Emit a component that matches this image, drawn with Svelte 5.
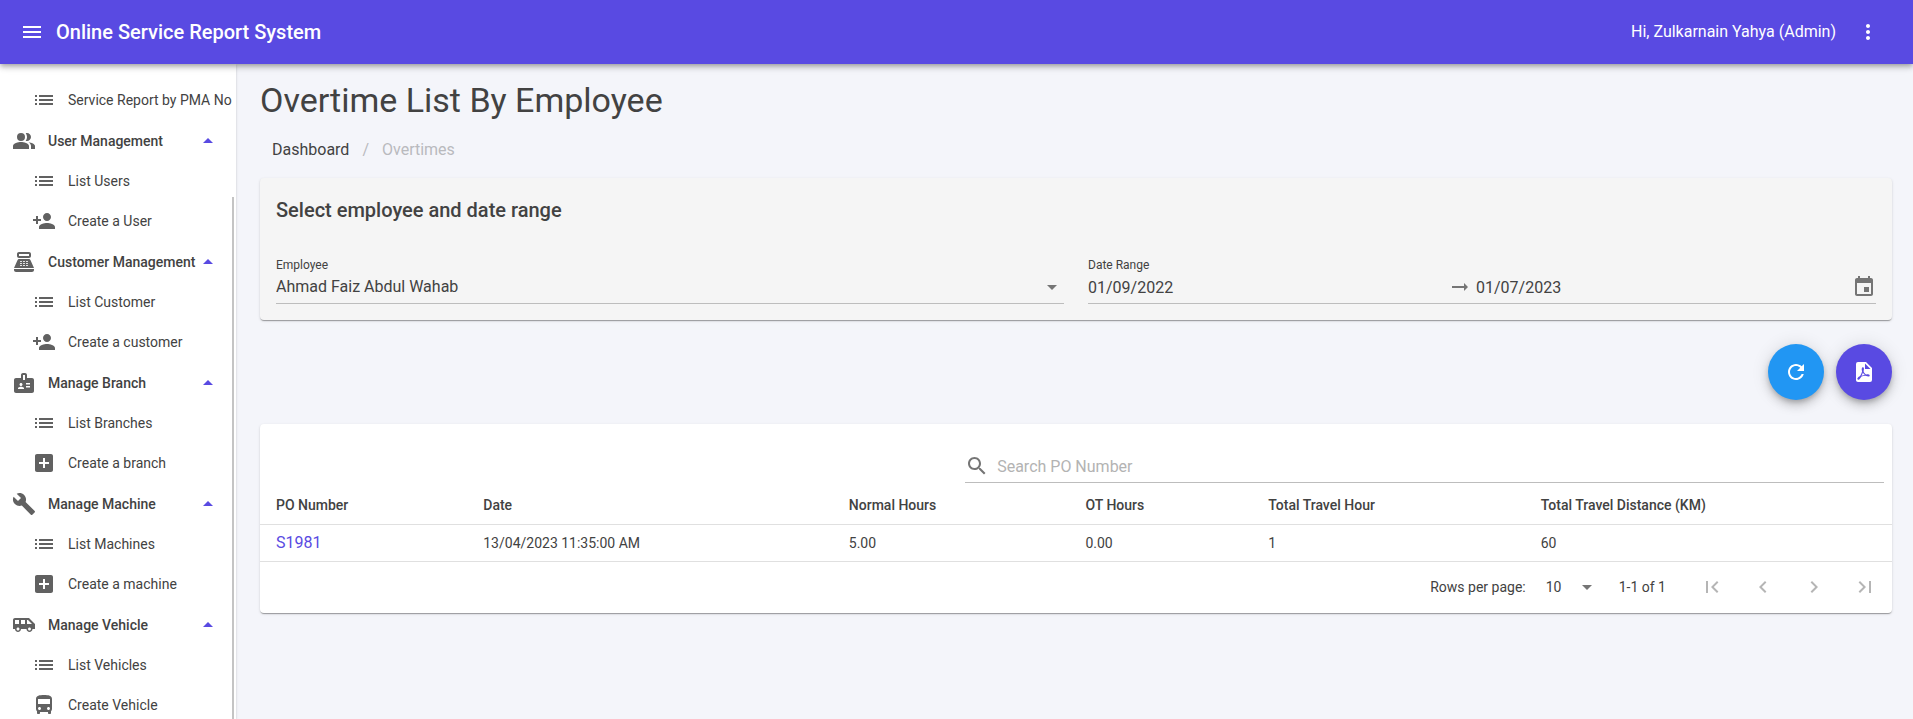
<script>
  const icons = {
    menu: 'M3 18h18v-2H3v2zm0-5h18v-2H3v2zm0-7v2h18V6H3z',
    more: 'M12 8c1.1 0 2-.9 2-2s-.9-2-2-2-2 .9-2 2 .9 2 2 2zm0 2c-1.1 0-2 .9-2 2s.9 2 2 2 2-.9 2-2-.9-2-2-2zm0 6c-1.1 0-2 .9-2 2s.9 2 2 2 2-.9 2-2-.9-2-2-2z',
    list: 'M3 13h2v-2H3v2zm0 4h2v-2H3v2zm0-8h2V7H3v2zm4 4h14v-2H7v2zm0 4h14v-2H7v2zM7 7v2h14V7H7z',
    people: 'M16.67 13.13C18.04 14.06 19 15.32 19 17v3h4v-3c0-2.18-3.57-3.47-6.33-3.87zM9 4a4 4 0 1 0 0 8 4 4 0 0 0 0-8zM15 12c2.21 0 4-1.79 4-4s-1.79-4-4-4c-.47 0-.91.1-1.33.24C14.5 5.27 15 6.58 15 8s-.5 2.73-1.33 3.76c.42.14.86.24 1.33.24zM9 13c-2.67 0-8 1.34-8 4v3h16v-3c0-2.66-5.33-4-8-4z',
    personAdd: 'M15 12c2.21 0 4-1.79 4-4s-1.79-4-4-4-4 1.79-4 4 1.79 4 4 4zm-9-2V7H4v3H1v2h3v3h2v-3h3v-2H6zm9 4c-2.67 0-8 1.34-8 4v2h16v-2c0-2.66-5.33-4-8-4z',
    register: 'M17 2H7c-1.1 0-2 .9-2 2v2c0 1.1.9 2 2 2h10c1.1 0 2-.9 2-2V4c0-1.1-.9-2-2-2zm0 4H7V4h10v2zm3 16H4c-1.1 0-2-.9-2-2v-1h20v1c0 1.1-.9 2-2 2zm-1.47-11.81C18.21 9.47 17.49 9 16.7 9H7.3c-.79 0-1.51.47-1.83 1.19L2 18h20l-3.47-7.81zM9.5 16h-1c-.28 0-.5-.22-.5-.5s.22-.5.5-.5h1c.28 0 .5.22.5.5s-.22.5-.5.5zm0-2h-1c-.28 0-.5-.22-.5-.5s.22-.5.5-.5h1c.28 0 .5.22.5.5s-.22.5-.5.5zm0-2h-1c-.28 0-.5-.22-.5-.5s.22-.5.5-.5h1c.28 0 .5.22.5.5s-.22.5-.5.5zm3 4h-1c-.28 0-.5-.22-.5-.5s.22-.5.5-.5h1c.28 0 .5.22.5.5s-.22.5-.5.5zm0-2h-1c-.28 0-.5-.22-.5-.5s.22-.5.5-.5h1c.28 0 .5.22.5.5s-.22.5-.5.5zm0-2h-1c-.28 0-.5-.22-.5-.5s.22-.5.5-.5h1c.28 0 .5.22.5.5s-.22.5-.5.5zm3 4h-1c-.28 0-.5-.22-.5-.5s.22-.5.5-.5h1c.28 0 .5.22.5.5s-.22.5-.5.5zm0-2h-1c-.28 0-.5-.22-.5-.5s.22-.5.5-.5h1c.28 0 .5.22.5.5s-.22.5-.5.5zm0-2h-1c-.28 0-.5-.22-.5-.5s.22-.5.5-.5h1c.28 0 .5.22.5.5s-.22.5-.5.5z',
    badge: 'M20 7h-5V4c0-1.1-.9-2-2-2h-2c-1.1 0-2 .9-2 2v3H4c-1.1 0-2 .9-2 2v11c0 1.1.9 2 2 2h16c1.1 0 2-.9 2-2V9c0-1.1-.9-2-2-2zM9 12c.83 0 1.5.67 1.5 1.5S9.83 15 9 15s-1.5-.67-1.5-1.5S8.17 12 9 12zm3 6H6v-.75c0-1 2-1.5 3-1.5s3 .5 3 1.5V18zm1-9h-2V4h2v5zm5 7.5h-4V15h4v1.5zm0-3h-4V12h4v1.5z',
    addBox: 'M19 3H5c-1.11 0-2 .9-2 2v14c0 1.1.89 2 2 2h14c1.1 0 2-.9 2-2V5c0-1.1-.9-2-2-2zm-2 10h-4v4h-2v-4H7v-2h4V7h2v4h4v2z',
    build: 'M22.7 19l-9.1-9.1c.9-2.3.4-5-1.5-6.9-2-2-5-2.4-7.4-1.3L9 6 6 9 1.6 4.7C.4 7.1.9 10.1 2.9 12.1c1.9 1.9 4.6 2.4 6.9 1.5l9.1 9.1c.4.4 1 .4 1.4 0l2.3-2.3c.5-.4.5-1.1.1-1.4z',
    shuttle: 'M17 5H3c-1.1 0-2 .89-2 2v9h2c0 1.65 1.34 3 3 3s3-1.35 3-3h5.5c0 1.65 1.34 3 3 3s3-1.35 3-3H23v-5l-6-6zM3 11V7h4v4H3zm3 6.5c-.83 0-1.5-.67-1.5-1.5s.67-1.5 1.5-1.5 1.5.67 1.5 1.5-.67 1.5-1.5 1.5zm7-6.5H9V7h4v4zm4.5 6.5c-.83 0-1.5-.67-1.5-1.5s.67-1.5 1.5-1.5 1.5.67 1.5 1.5-.67 1.5-1.5 1.5zM15 11V7h1l4 4h-5z',
    bus: 'M4 16c0 .88.39 1.67 1 2.22V20c0 .55.45 1 1 1h1c.55 0 1-.45 1-1v-1h8v1c0 .55.45 1 1 1h1c.55 0 1-.45 1-1v-1.78c.61-.55 1-1.34 1-2.22V6c0-3.5-3.58-4-8-4s-8 .5-8 4v10zm3.5 1c-.83 0-1.5-.67-1.5-1.5S6.67 14 7.5 14s1.5.67 1.5 1.5S8.33 17 7.5 17zm9 0c-.83 0-1.5-.67-1.5-1.5s.67-1.5 1.5-1.5 1.5.67 1.5 1.5-.67 1.5-1.5 1.5zm1.5-6H6V6h12v5z',
    up: 'M7 14l5-5 5 5H7z',
    down: 'M7 10l5 5 5-5H7z',
    refresh: 'M17.65 6.35C16.2 4.9 14.21 4 12 4c-4.42 0-7.99 3.58-7.99 8s3.57 8 7.99 8c3.73 0 6.84-2.55 7.73-6h-2.08c-.82 2.33-3.04 4-5.65 4-3.31 0-6-2.69-6-6s2.69-6 6-6c1.66 0 3.14.69 4.22 1.78L13 11h7V4l-2.35 2.35z',
    pdf: 'M14,9H19.5L14,3.5V9M7,2H15L21,8V20A2,2 0 0,1 19,22H7C5.89,22 5,21.1 5,20V4A2,2 0 0,1 7,2M11.93,12.44C12.34,13.34 12.86,14.08 13.46,14.59L13.87,14.91C13,15.07 11.8,15.35 10.53,15.84L10.42,15.88L10.92,14.84C11.37,13.97 11.7,13.18 11.93,12.44M18.41,16.25C18.59,16.07 18.68,15.84 18.69,15.59C18.72,15.39 18.67,15.2 18.57,15.04C18.28,14.57 17.53,14.35 16.29,14.35L15,14.42L14.13,13.84C13.5,13.32 12.93,12.41 12.53,11.28L12.57,11.14C12.9,9.81 13.21,8.2 12.55,7.54C12.39,7.38 12.17,7.3 11.94,7.3H11.7C11.33,7.3 11,7.69 10.91,8.07C10.54,9.4 10.76,10.13 11.13,11.34V11.35C10.88,12.23 10.56,13.25 10.05,14.28L9.09,16.08L8.2,16.57C7,17.32 6.43,18.16 6.32,18.69C6.28,18.88 6.3,19.05 6.37,19.23L6.4,19.28L6.88,19.59L7.32,19.7C8.13,19.7 9.05,18.75 10.29,16.63L10.47,16.56C11.5,16.23 12.78,16 14.5,15.81C15.53,16.32 16.74,16.55 17.5,16.55C17.94,16.55 18.24,16.44 18.41,16.25Z',
    calendar: 'M17 12h-5v5h5v-5zM16 1v2H8V1H6v2H5c-1.11 0-1.99.9-1.99 2L3 19c0 1.1.89 2 2 2h14c1.1 0 2-.9 2-2V5c0-1.1-.9-2-2-2h-1V1h-2zm3 18H5V8h14v11z',
    arrow: 'M16.01 11H4v2h12.01v3L20 12l-3.99-4z',
    search: 'M15.5 14h-.79l-.28-.27C15.41 12.59 16 11.11 16 9.5 16 5.91 13.09 3 9.5 3S3 5.91 3 9.5 5.91 16 9.5 16c1.61 0 3.09-.59 4.23-1.57l.27.28v.79l5 4.99L20.49 19l-4.99-5zm-6 0C7.01 14 5 11.99 5 9.5S7.01 5 9.5 5 14 7.01 14 9.5 11.99 14 9.5 14z',
    first: 'M18.41 16.59L13.82 12l4.59-4.59L17 6l-6 6 6 6zM6 6h2v12H6z',
    prev: 'M15.41 7.41L14 6l-6 6 6 6 1.41-1.41L10.83 12z',
    next: 'M10 6L8.59 7.41 13.17 12l-4.58 4.59L10 18l6-6z',
    last: 'M5.59 7.41L10.18 12l-4.59 4.59L7 18l6-6-6-6zM16 6h2v12h-2z'
  };

  const groups = [
    { title: 'User Management', icon: 'people', items: [['list', 'List Users'], ['personAdd', 'Create a User']] },
    { title: 'Customer Management', icon: 'register', items: [['list', 'List Customer'], ['personAdd', 'Create a customer']] },
    { title: 'Manage Branch', icon: 'badge', items: [['list', 'List Branches'], ['addBox', 'Create a branch']] },
    { title: 'Manage Machine', icon: 'build', items: [['list', 'List Machines'], ['addBox', 'Create a machine']] },
    { title: 'Manage Vehicle', icon: 'shuttle', items: [['list', 'List Vehicles'], ['bus', 'Create Vehicle']] }
  ];

  const columns = ['PO Number', 'Date', 'Normal Hours', 'OT Hours', 'Total Travel Hour', 'Total Travel Distance (KM)'];
  const rows = [['S1981', '13/04/2023 11:35:00 AM', '5.00', '0.00', '1', '60']];
  const pager = [['first', 'First page'], ['prev', 'Previous page'], ['next', 'Next page'], ['last', 'Last page']];

  let open = $state(groups.map(() => true));
  let from = $state('01/09/2022');
  let to = $state('01/07/2023');
  let query = $state('');
  let shown = $derived(rows.filter((r) => r[0].toLowerCase().includes(query.toLowerCase())));
</script>

{#snippet icon(name)}
  <svg class="icon" viewBox="0 0 24 24" aria-hidden="true"><path d={icons[name]} /></svg>
{/snippet}

{#snippet navItem(name, label)}
  <li><a class="item" href="#top">{@render icon(name)}<span>{label}</span></a></li>
{/snippet}

<div class="app" id="top">
  <header class="appbar">
    <button class="bar-btn" aria-label="Toggle menu">{@render icon('menu')}</button>
    <span class="brand">Online Service Report System</span>
    <span class="user">Hi, Zulkarnain Yahya (Admin)</span>
    <button class="bar-btn" aria-label="More options">{@render icon('more')}</button>
  </header>

  <div class="body">
    <aside class="drawer">
      <nav>
        <ul>{@render navItem('list', 'Service Report by PMA No')}</ul>
        {#each groups as group, i}
          <button class="group" aria-expanded={open[i]} onclick={() => (open[i] = !open[i])}>
            {@render icon(group.icon)}
            <span class="group-title">{group.title}</span>
            <span class="caret">{@render icon(open[i] ? 'up' : 'down')}</span>
          </button>
          {#if open[i]}
            <ul>
              {#each group.items as [name, label]}
                {@render navItem(name, label)}
              {/each}
            </ul>
          {/if}
        {/each}
      </nav>
      <div class="thumb"></div>
    </aside>

    <main>
      <h1>Overtime List By Employee</h1>
      <ol class="crumbs">
        <li><a href="#top">Dashboard</a></li>
        <li class="sep" aria-hidden="true">/</li>
        <li class="current">Overtimes</li>
      </ol>

      <section class="card filter">
        <h2>Select employee and date range</h2>
        <div class="fields">
          <div class="field">
            <label for="employee">Employee</label>
            <div class="control select">
              <select id="employee"><option>Ahmad Faiz Abdul Wahab</option></select>
              {@render icon('down')}
            </div>
          </div>
          <div class="field">
            <label for="from">Date Range</label>
            <div class="control">
              <input id="from" type="text" bind:value={from} />
              {@render icon('arrow')}
              <input class="to" type="text" aria-label="End date" bind:value={to} />
              <button class="picker" aria-label="Open calendar">{@render icon('calendar')}</button>
            </div>
          </div>
        </div>
      </section>

      <div class="actions">
        <button class="fab info" aria-label="Refresh">{@render icon('refresh')}</button>
        <button class="fab pdf" aria-label="Export PDF">
          <svg class="icon" viewBox="1 0 24 24" aria-hidden="true"><path d={icons.pdf} /></svg>
        </button>
      </div>

      <section class="card">
        <div class="toolbar">
          <div class="control search">
            {@render icon('search')}
            <input type="text" placeholder="Search PO Number" aria-label="Search PO Number" bind:value={query} />
          </div>
        </div>
        <table>
          <thead>
            <tr>{#each columns as col}<th scope="col">{col}</th>{/each}</tr>
          </thead>
          <tbody>
            {#each shown as row}
              <tr>
                {#each row as cell, c}
                  <td>{#if c === 0}<a href="#top">{cell}</a>{:else}{cell}{/if}</td>
                {/each}
              </tr>
            {/each}
          </tbody>
        </table>
        <div class="pagination">
          <label for="page-size">Rows per page:</label>
          <div class="select size">
            <select id="page-size"><option>10</option><option>25</option><option>50</option></select>
            {@render icon('down')}
          </div>
          <span>1-1 of 1</span>
          <div class="pager">
            {#each pager as [name, label]}
              <button disabled aria-label={label}>{@render icon(name)}</button>
            {/each}
          </div>
        </div>
      </section>
    </main>
  </div>
</div>

<style>
  :global(body) {
    background: #f4f5fa;
  }
  .app {
    box-sizing: border-box;
    height: 100vh;
    display: flex;
    flex-direction: column;
    overflow: hidden;
    background: #f4f5fa;
    color: #424242;
    font-family: Roboto, "Liberation Sans", sans-serif;
    font-size: 14px;
    line-height: 20px;
  }
  .app :is(button, input, select) {
    font: inherit;
    color: inherit;
    background: none;
    border: 0;
    margin: 0;
    padding: 0;
    outline: 0;
  }
  button {
    cursor: pointer;
  }
  a {
    color: inherit;
    text-decoration: none;
  }
  ul,
  ol {
    list-style: none;
    margin: 0;
    padding: 0;
  }
  .icon {
    display: block;
    flex: none;
    width: 24px;
    height: 24px;
    fill: currentColor;
  }

  .appbar {
    position: relative;
    z-index: 2;
    flex: none;
    display: flex;
    align-items: center;
    height: 64px;
    padding: 0 33px 0 20px;
    background: #594ae2;
    color: #fff;
    box-shadow: 0 2px 4px -1px rgba(0, 0, 0, 0.2), 0 4px 5px 0 rgba(0, 0, 0, 0.14), 0 1px 10px 0 rgba(0, 0, 0, 0.12);
  }
  .brand {
    flex: 1;
    margin-left: 12px;
    font-size: 20px;
    font-weight: 500;
    line-height: 32px;
  }
  .user {
    margin-right: 20px;
    font-size: 16px;
    line-height: 24px;
  }

  .body {
    flex: 1;
    min-height: 0;
    display: flex;
  }
  .drawer {
    position: relative;
    z-index: 1;
    flex: none;
    width: 236px;
    overflow: hidden;
    background: #fff;
    box-shadow: 0 2px 1px -1px rgba(0, 0, 0, 0.2), 0 1px 1px 0 rgba(0, 0, 0, 0.14), 0 1px 3px 0 rgba(0, 0, 0, 0.12);
  }
  nav {
    padding-top: 16px;
  }
  .thumb {
    position: absolute;
    top: 133px;
    right: 2px;
    bottom: 0;
    width: 2px;
    background: #c4c4c4;
  }
  .item,
  .group {
    display: flex;
    align-items: center;
    gap: 12px;
    white-space: nowrap;
  }
  .item {
    height: 40px;
    padding-left: 32px;
  }
  .item .icon,
  .group > :global(.icon) {
    color: #616161;
  }
  .app .group {
    width: 100%;
    height: 41px;
    padding: 0 16px 0 12px;
    font-weight: 500;
    text-align: left;
  }
  .group-title {
    flex: 1;
  }
  .caret {
    margin-left: -12px;
    color: #594ae2;
  }

  main {
    flex: 1;
    min-width: 0;
    padding: 15px 21px 24px 24px;
    overflow: hidden;
  }
  h1 {
    margin: 0;
    font-size: 34px;
    font-weight: 400;
    line-height: 42px;
  }
  .crumbs {
    display: flex;
    gap: 13px;
    padding: 17px 12px 16px;
    font-size: 16px;
    line-height: 24px;
  }
  .sep,
  .current {
    color: #b9babe;
  }
  .card {
    border-radius: 4px;
    background: #fff;
    box-shadow: 0 2px 1px -1px rgba(0, 0, 0, 0.2), 0 1px 1px 0 rgba(0, 0, 0, 0.14), 0 1px 3px 0 rgba(0, 0, 0, 0.12);
  }
  .filter {
    padding: 16px;
    background: #f5f5f5;
  }
  h2 {
    margin: 0;
    font-size: 20px;
    font-weight: 500;
    line-height: 32px;
  }
  .fields {
    display: grid;
    grid-template-columns: 1fr 1fr;
    gap: 24px;
    margin-top: 31px;
  }
  .field label {
    display: block;
    font-size: 12px;
    line-height: 16px;
  }
  .control {
    display: flex;
    align-items: center;
    height: 28px;
    padding-bottom: 2px;
    border-bottom: 1px solid #bdbdbd;
    font-size: 16px;
  }
  .control :is(input, select) {
    flex: 1;
    min-width: 0;
    height: 28px;
  }
  .control .icon {
    color: #757575;
  }
  .app .to {
    margin-left: 4px;
  }
  .app .picker {
    margin-left: 16px;
  }
  .select {
    position: relative;
  }
  .select select {
    appearance: none;
  }
  .select .icon {
    position: absolute;
    right: 0;
    color: #757575;
    pointer-events: none;
  }

  .actions {
    display: flex;
    justify-content: flex-end;
    gap: 12px;
    margin: 24px 0;
  }
  .app .fab {
    display: flex;
    align-items: center;
    justify-content: center;
    width: 56px;
    height: 56px;
    border-radius: 50%;
    color: #fff;
    box-shadow: 0 3px 5px -1px rgba(0, 0, 0, 0.2), 0 6px 10px 0 rgba(0, 0, 0, 0.14), 0 1px 18px 0 rgba(0, 0, 0, 0.12);
  }
  .app .info {
    background: #2196f3;
  }
  .app .pdf {
    background: #594ae2;
  }

  .toolbar {
    display: flex;
    justify-content: flex-end;
    padding: 28px 8px 4px 12px;
  }
  .search {
    width: 57%;
  }
  .app .search input {
    margin-left: 8px;
  }
  .search input::placeholder {
    color: #b3b3b3;
    opacity: 1;
  }
  table {
    width: 100%;
    border-collapse: separate;
    border-spacing: 0;
    table-layout: fixed;
  }
  th,
  td {
    box-sizing: border-box;
    height: 37px;
    padding: 0 16px 1px;
    border-bottom: 1px solid #e0e0e0;
    text-align: left;
    font-weight: 400;
    white-space: nowrap;
  }
  th {
    height: 38px;
    padding-bottom: 2px;
    font-weight: 500;
  }
  th:nth-child(1) {
    width: 12.7%;
  }
  th:nth-child(2) {
    width: 22.4%;
  }
  th:nth-child(3) {
    width: 14.5%;
  }
  th:nth-child(4) {
    width: 11.2%;
  }
  th:nth-child(5) {
    width: 16.7%;
  }
  td a {
    color: #594ae2;
    font-size: 16px;
  }
  .pagination {
    display: flex;
    align-items: center;
    justify-content: flex-end;
    height: 50px;
    padding: 0 3px 1px 0;
  }
  .size {
    display: flex;
    align-items: center;
    width: 53px;
    margin: 0 20px;
  }
  .size select {
    width: 100%;
  }
  .pager {
    display: flex;
    gap: 3px;
    margin-left: 22px;
  }
  .pager button {
    display: flex;
    align-items: center;
    justify-content: center;
    width: 48px;
    height: 48px;
    color: #b5b5b5;
    cursor: default;
  }
</style>
